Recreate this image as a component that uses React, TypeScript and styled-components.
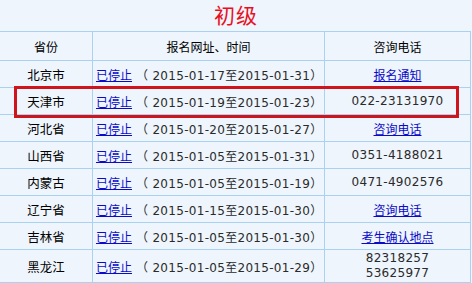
import { FC } from "react";
import styled, { createGlobalStyle } from "styled-components";

type Row = {
  province: string;
  start: string;
  end: string;
  phone?: string[];
  link?: string;
};

const rows: Row[] = [
  { province: "北京市", start: "2015-01-17", end: "2015-01-31", link: "报名通知" },
  { province: "天津市", start: "2015-01-19", end: "2015-01-23", phone: ["022-23131970"] },
  { province: "河北省", start: "2015-01-20", end: "2015-01-27", link: "咨询电话" },
  { province: "山西省", start: "2015-01-05", end: "2015-01-31", phone: ["0351-4188021"] },
  { province: "内蒙古", start: "2015-01-05", end: "2015-01-19", phone: ["0471-4902576"] },
  { province: "辽宁省", start: "2015-01-15", end: "2015-01-30", link: "咨询电话" },
  { province: "吉林省", start: "2015-01-05", end: "2015-01-30", link: "考生确认地点" },
  { province: "黑龙江", start: "2015-01-05", end: "2015-01-29", phone: ["82318257", "53625977"] },
];

const GlobalStyle = createGlobalStyle`
  html, body {
    margin: 0;
    padding: 0;
    background: #eef5fc;
  }

  body {
    font-family: "DejaVu Sans", "Noto Sans CJK SC", sans-serif;
    font-size: 12px;
    color: #000;
    overflow: hidden;
  }
`;

const App: FC = () => {
  return (
    <Page>
      <GlobalStyle />
      <Title>初级</Title>
      <TableWrap>
        <Table>
          <colgroup>
            <col style={{ width: 93 }} />
            <col style={{ width: 232 }} />
            <col style={{ width: 146 }} />
          </colgroup>
          <thead>
            <tr>
              <Th>省份</Th>
              <Th>报名网址、时间</Th>
              <Th>咨询电话</Th>
            </tr>
          </thead>
          <tbody>
            {rows.map((row) => (
              <Tr key={row.province} $tall={!!row.phone && row.phone.length > 1}>
                <Province>{row.province}</Province>
                <Period>
                  <Link href="#">已停止</Link>
                  <Dates>
                    （ {row.start}至{row.end}）
                  </Dates>
                </Period>
                <Contact>
                  {row.link ? (
                    <Link href="#">{row.link}</Link>
                  ) : (
                    row.phone?.map((p) => <Phone key={p}>{p}</Phone>)
                  )}
                </Contact>
              </Tr>
            ))}
          </tbody>
        </Table>
        <Highlight />
      </TableWrap>
    </Page>
  );
};

const Page = styled.div`
  width: 472px;
  height: 283px;
  overflow: hidden;
`;

const Title = styled.h2`
  margin: 0;
  padding-top: 1px;
  height: 30px;
  line-height: 26px;
  text-align: center;
  color: #e8101f;
  font-family: "Noto Sans CJK SC", sans-serif;
  font-size: 21px;
  font-weight: 400;
  letter-spacing: 1px;
`;

const TableWrap = styled.div`
  position: relative;
`;

const Table = styled.table`
  width: 472px;
  margin-left: -1px;
  border-collapse: collapse;
  table-layout: fixed;

  td,
  th {
    border: 1px solid #a9d2f0;
    padding: 0;
  }
`;

const Th = styled.th`
  height: 28px;
  font-weight: 400;
  text-align: center;
  color: #000;
`;

const Tr = styled.tr<{ $tall: boolean }>`
  height: ${(props) => (props.$tall ? "33px" : "27px")};
`;

const Province = styled.td`
  text-align: center;
  color: #000;
  font-size: 12.5px;
`;

const Period = styled.td`
  padding-left: 3px !important;
  white-space: nowrap;
  letter-spacing: 0.3px;
`;

const Dates = styled.span`
  margin-left: 4px;
  color: #2a2a2a;
`;

const Contact = styled.td`
  text-align: center;
  color: #2a2a2a;
  letter-spacing: 0.3px;
`;

const Phone = styled.div`
  line-height: 15px;
`;

const Link = styled.a`
  color: #0a0ac8;
  text-decoration: underline;
  letter-spacing: 0;
`;

const Highlight = styled.div`
  position: absolute;
  left: 14px;
  top: 55px;
  width: 439px;
  height: 26px;
  border: 3px solid #d0141c;
  pointer-events: none;
`;

export default App;
